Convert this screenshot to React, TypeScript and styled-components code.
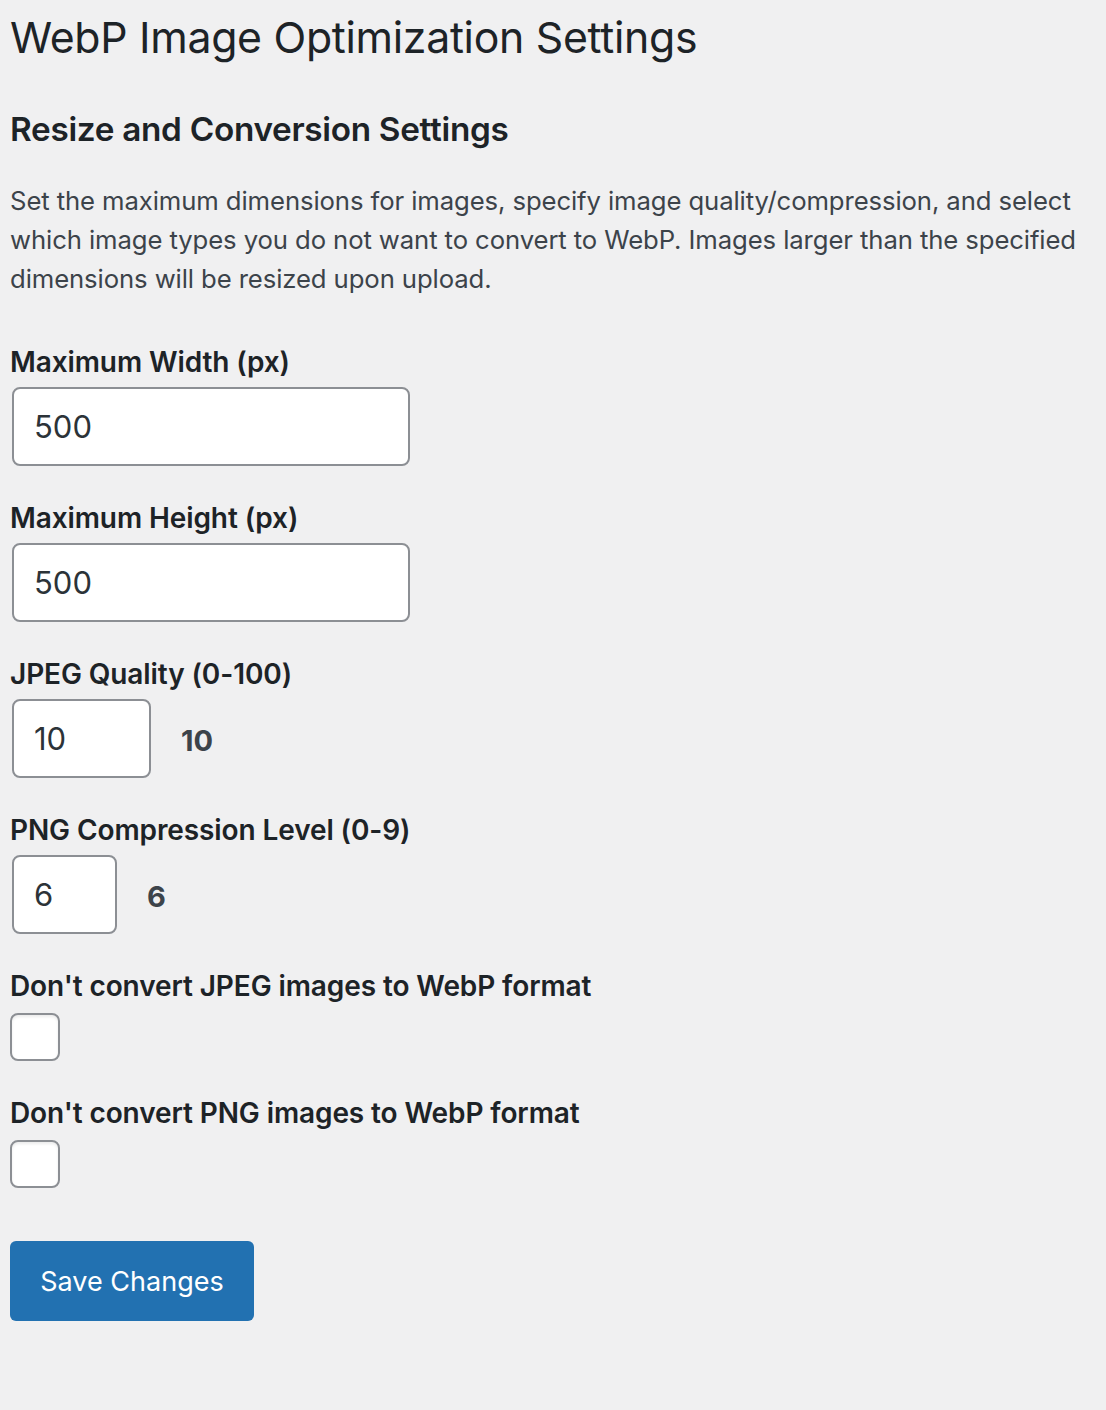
import React, { useState } from "react";
import styled, { createGlobalStyle } from "styled-components";

const Global = createGlobalStyle`
  html, body { margin: 0; padding: 0; background: #f0f0f1; }
  body { font-family: Inter, "Noto Sans", sans-serif; color: #1d2327; }
  * { box-sizing: border-box; }
`;

const Wrap = styled.div`
  padding: 0 20px 0 10px;
  min-height: 1410px;
`;

const Title = styled.h1`
  margin: 0;
  padding-top: 10px;
  font-size: 42.8px;
  font-weight: 400;
  line-height: 56px;
  color: #1d2327;
  letter-spacing: -0.3px;
`;

const SectionTitle = styled.h2`
  margin: 41px 0 0;
  font-size: 33.3px;
  font-weight: 600;
  line-height: 44px;
  color: #1d2327;
  letter-spacing: -0.3px;
`;

const Description = styled.p`
  margin: 30px 0 0;
  font-size: 25.7px;
  line-height: 39px;
  color: #3c434a;
  letter-spacing: -0.1px;
`;

const Form = styled.form`
  display: flex;
  flex-direction: column;
  margin-top: 47px;
`;

const Field = styled.div`
  display: flex;
  flex-direction: column;
  align-items: flex-start;
  & + & {
    margin-top: 35px;
  }
`;

const Label = styled.label`
  font-size: 28px;
  font-weight: 600;
  line-height: 34px;
  color: #1d2327;
  letter-spacing: -0.1px;
`;

const Row = styled.div`
  display: flex;
  align-items: center;
  gap: 30px;
  margin-top: 8px;
  margin-left: 2px;
`;

const TextInput = styled.input<{ $w: number }>`
  width: ${(p) => p.$w}px;
  height: 79px;
  border: 2px solid #8c8f94;
  border-radius: 8px;
  background: #fff;
  padding: 0 20px;
  font-family: Inter, "Noto Sans", sans-serif;
  font-size: 31px;
  color: #2c3338;
  outline: none;
`;

const Value = styled.span`
  font-size: 29px;
  font-weight: 700;
  color: #3c434a;
  padding-top: 4px;
`;

const Check = styled.input`
  appearance: none;
  width: 50px;
  height: 48px;
  margin: 10px 0 0;
  border: 2px solid #8c8f94;
  border-radius: 8px;
  background: #fff;
  box-shadow: inset 0 2px 3px rgba(0, 0, 0, 0.08);
`;

const Submit = styled.button`
  align-self: flex-start;
  margin-top: 53px;
  width: 244px;
  height: 80px;
  border: none;
  border-radius: 6px;
  background: #2271b1;
  color: #fff;
  font-family: Inter, "Noto Sans", sans-serif;
  font-size: 27px;
  font-weight: 400;
  cursor: pointer;
`;

export default function App() {
  const [w, setW] = useState("500");
  const [h, setH] = useState("500");
  const [q, setQ] = useState("10");
  const [c, setC] = useState("6");
  return (
    <>
      <Global />
      <Wrap>
        <Title>WebP Image Optimization Settings</Title>
        <SectionTitle>Resize and Conversion Settings</SectionTitle>
        <Description>
          Set the maximum dimensions for images, specify image quality/compression, and select
          which image types you do not want to convert to WebP. Images larger than the specified
          dimensions will be resized upon upload.
        </Description>
        <Form onSubmit={(e) => e.preventDefault()}>
          <Field>
            <Label>Maximum Width (px)</Label>
            <Row>
              <TextInput $w={398} value={w} onChange={(e) => setW(e.target.value)} />
            </Row>
          </Field>
          <Field>
            <Label>Maximum Height (px)</Label>
            <Row>
              <TextInput $w={398} value={h} onChange={(e) => setH(e.target.value)} />
            </Row>
          </Field>
          <Field>
            <Label>JPEG Quality (0-100)</Label>
            <Row>
              <TextInput $w={139} value={q} onChange={(e) => setQ(e.target.value)} />
              <Value>{q}</Value>
            </Row>
          </Field>
          <Field>
            <Label>PNG Compression Level (0-9)</Label>
            <Row>
              <TextInput $w={105} value={c} onChange={(e) => setC(e.target.value)} />
              <Value>{c}</Value>
            </Row>
          </Field>
          <Field>
            <Label>Don't convert JPEG images to WebP format</Label>
            <Check type="checkbox" />
          </Field>
          <Field>
            <Label>Don't convert PNG images to WebP format</Label>
            <Check type="checkbox" />
          </Field>
          <Submit type="submit">Save Changes</Submit>
        </Form>
      </Wrap>
    </>
  );
}
